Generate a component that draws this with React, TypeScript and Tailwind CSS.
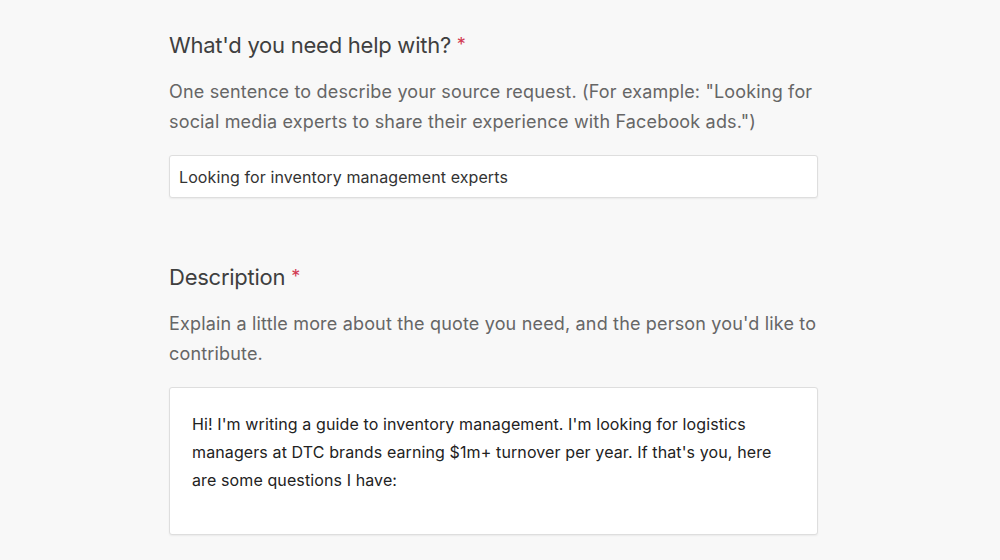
import React from "react";

export default function App() {
  return (
    <div
      className="w-[1000px] h-[560px] overflow-hidden bg-[#f8f8f8]"
      style={{ fontFamily: 'Inter, "Liberation Sans", Arial, sans-serif' }}
    >
      <div className="ml-[169px] w-[649px] pt-[30px]">
        <h2 className="text-[22px] leading-[30px] text-[#3f3f3f] font-normal tracking-[-0.25px]">
          What'd you need help with? <span className="text-[#d23a52] text-[18px] align-top">*</span>
        </h2>
        <p className="mt-[17px] text-[18px] leading-[30px] text-[#666] tracking-[0.17px]">
          One sentence to describe your source request. (For example: "Looking for social media experts to share their experience with Facebook ads.")
        </p>
        <div className="mt-[18px] h-[43px] bg-white border border-[#dedede] rounded-[3px] shadow-[0_1px_2px_rgba(0,0,0,0.06)] flex items-center px-[9px] text-[16px] text-[#333] tracking-[0.1px]">
          Looking for inventory management experts
        </div>

        <h2 className="mt-[64px] text-[22px] leading-[30px] text-[#3f3f3f] font-normal tracking-[-0.25px]">
          Description <span className="text-[#d23a52] text-[18px] align-top">*</span>
        </h2>
        <p className="mt-[17px] text-[18px] leading-[30px] text-[#666] tracking-[0.17px]">
          Explain a little more about the quote you need, and the person you'd like to contribute.
        </p>
        <div className="mt-[18px] h-[148px] bg-white border border-[#dedede] rounded-[3px] shadow-[0_1px_2px_rgba(0,0,0,0.06)] pl-[22px] pr-[40px] pt-[22px] text-[16px] leading-[28px] text-[#222] tracking-[0.11px]">
          Hi! I'm writing a guide to inventory management. I'm looking for logistics managers at DTC brands earning $1m+ turnover per year. If that's you, here are some questions I have:
        </div>
      </div>
    </div>
  );
}
